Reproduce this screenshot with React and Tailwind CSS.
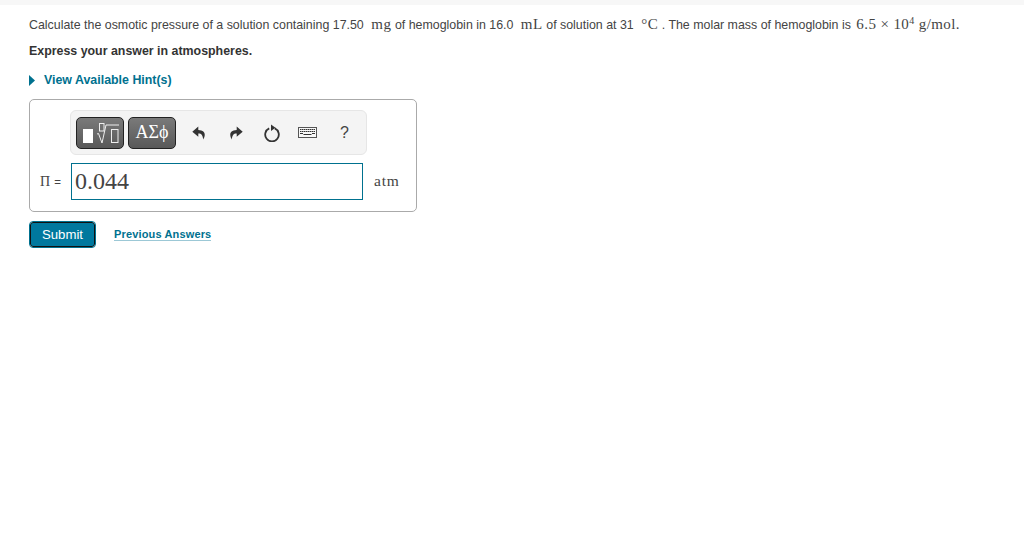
const serif = "font-['Liberation_Serif',serif]";

const Math = ({ children, className = "" }) => (
  <span className={`${serif} text-[15px] ${className}`}>{children}</span>
);

const MathTemplateIcon = () => (
  <svg width="46" height="30" viewBox="0 0 46 30" fill="none">
    <rect x="6" y="11" width="10" height="14" fill="#fff" />
    <rect x="22.500" y="5.500" width="4.500" height="7.500" stroke="#eee" />
    <path d="M20 16l1.500-.5 3.500 9.500 4-18h13" stroke="#eee" strokeWidth="1" />
    <rect x="34.500" y="11.500" width="6.500" height="13" stroke="#eee" />
  </svg>
);

const UndoIcon = ({ flip }) => (
  <svg width="14" height="14" viewBox="0 0 14 14" className={flip ? "-scale-x-100" : ""}>
    <path d="M6.300 0.500L0.300 5.800l6 5V7.600c2.700-.1 4.300.8 4.900 5.900 2.300-3.700 3-9.200-4.900-9.500V.5z" fill="#333" />
  </svg>
);

const ResetIcon = () => (
  <svg width="16" height="18" viewBox="0 0 16 18" fill="none">
    <path d="M5.200 4.400a6.800 6.800 0 1 0 5.600 0" stroke="#333" strokeWidth="1.800" />
    <path d="M7 0.500v6.500l4.500-3.300z" fill="#333" />
  </svg>
);

const KeyboardIcon = () => (
  <svg width="19" height="11" viewBox="0 0 19 11" fill="none">
    <rect x="0.500" y="0.500" width="18" height="10" fill="#f8f8f8" stroke="#555" />
    <path d="M2 2.500h15M2 4.500h15" stroke="#333" strokeDasharray="1.500 0.500" />
    <path d="M2 6.500h3M5.500 7.500h8M14 6.500h3" stroke="#333" />
  </svg>
);

const ToolButton = ({ children, className = "" }) => (
  <div className={`flex h-[32px] items-center justify-center rounded-[5px] border border-[#222] bg-gradient-to-b from-[#7a7a7a] to-[#595959] text-white ${className}`}>
    {children}
  </div>
);

const Toolbar = () => (
  <div className="ml-[40px] flex h-[45px] w-[297px] items-center rounded-md border border-[#e6e6e6] bg-[#f4f4f4] pl-[5px]">
    <ToolButton className="w-[48px]">
      <MathTemplateIcon />
    </ToolButton>
    <ToolButton className={`ml-[4px] w-[48px] text-[18px] ${serif}`}>ΑΣϕ</ToolButton>
    <div className="ml-[16px] flex w-[14px] justify-center"><UndoIcon /></div>
    <div className="ml-[23px] flex w-[14px] justify-center"><UndoIcon flip /></div>
    <div className="ml-[21px] flex w-[16px] justify-center"><ResetIcon /></div>
    <div className="ml-[17px] flex w-[20px] justify-center"><KeyboardIcon /></div>
    <div className="ml-[23px] text-[16px] text-[#444]">?</div>
  </div>
);

export default function App() {
  return (
    <div className="min-h-[550px] bg-white font-['Liberation_Sans',sans-serif] text-[#333]">
      <div className="h-[5px] bg-[#f7f7f7]" />
      <div className="pl-[29px] pt-[9px]">
        <p className="h-[20px] whitespace-nowrap text-[12.4px] leading-[20px] text-[#444]">
          Calculate the osmotic pressure of a solution containing 17.50 <Math className="ml-[4px] tracking-[0.55px]">mg</Math> of hemoglobin in 16.0 <Math className="ml-[4px] tracking-[0.55px]">mL</Math> of solution at 31 <Math className="ml-[4px] tracking-[0.55px]">°C</Math> . The molar mass of hemoglobin is <Math className="ml-[2px] tracking-[0.4px]">6.5 × 10<sup className="text-[10px]">4</sup> g/mol.</Math>
        </p>
        <p className="mt-[7px] h-[20px] text-[12.4px] font-bold leading-[20px] text-[#333]">Express your answer in atmospheres.</p>
        <div className="mt-[11px] flex h-[16px] items-center">
          <svg width="6" height="11" viewBox="0 0 6 11"><path d="M0 0l6 5.500L0 11z" fill="#00718f" /></svg>
          <span className="ml-[9px] text-[12.4px] font-bold text-[#00718f]">View Available Hint(s)</span>
        </div>
        <div className="mt-[11px] h-[113px] w-[388px] rounded-[5px] border border-[#aaa] pt-[10px]">
          <Toolbar />
          <div className="mt-[8px] flex items-center">
            <span className="ml-[10px] w-[22px] whitespace-nowrap text-[11.5px] text-[#444]">
              <span className={`${serif} text-[14px] tracking-[1px]`}>Π</span> =
            </span>
            <div className={`ml-[9px] flex h-[37px] w-[292px] items-center border border-[#00718f] pb-[2px] pl-[3px] text-[24px] text-[#444] ${serif}`}>0.044</div>
            <span className={`ml-[11px] pb-[1px] text-[15.5px] tracking-[0.8px] text-[#444] ${serif}`}>atm</span>
          </div>
        </div>
        <div className="mt-[10px] flex items-center">
          <button className="ml-[1px] h-[25px] w-[65px] rounded-[3px] border-[1.5px] border-[#111] bg-[#00789e] text-[13.2px] text-white outline outline-1 outline-[#00718f]">Submit</button>
          <a className="ml-[19px] border-b border-[#9cc8d6] text-[11px] font-bold leading-[12px] tracking-[0.15px] text-[#00718f]">Previous Answers</a>
        </div>
      </div>
    </div>
  );
}
